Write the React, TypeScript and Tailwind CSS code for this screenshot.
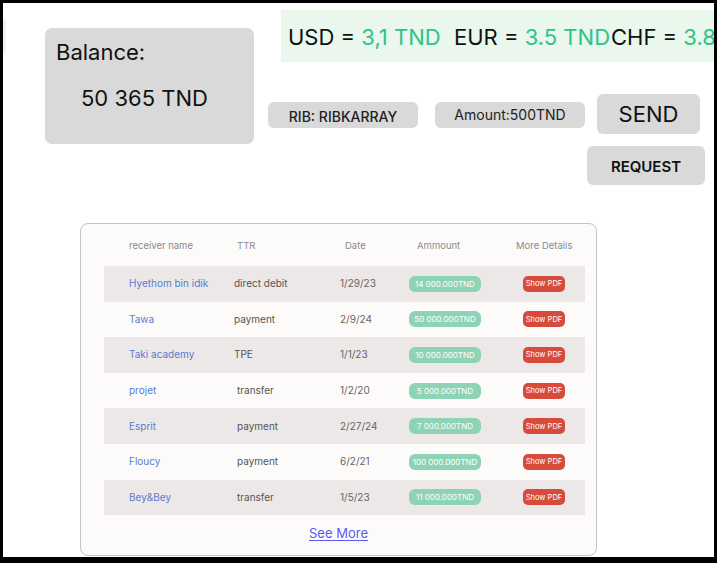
const rows = [
  { name: 'Hyethom bin idik', ttr: 'direct debit', date: '1/29/23', amount: '14 000.000TND', shift: false },
  { name: 'Tawa', ttr: 'payment', date: '2/9/24', amount: '50 000.000TND', shift: false },
  { name: 'Taki academy', ttr: 'TPE', date: '1/1/23', amount: '10 000.000TND', shift: false },
  { name: 'projet', ttr: 'transfer', date: '1/2/20', amount: '5 000.000TND', shift: true },
  { name: 'Esprit', ttr: 'payment', date: '2/27/24', amount: '7 000.000TND', shift: true },
  { name: 'Floucy', ttr: 'payment', date: '6/2/21', amount: '100 000.000TND', shift: true },
  { name: 'Bey&Bey', ttr: 'transfer', date: '1/5/23', amount: '11 000.000TND', shift: true },
];

const App = () => {
  return (
    <div className="bg-black pt-[3px] pl-[3px] pr-[3px] pb-[6px] font-['Inter',sans-serif]">
      <div className="bg-white h-[554px] overflow-hidden">
        {/* top area */}
        <div className="flex h-[182px]">
          <div className="w-[3px] h-[33px] mt-[17px] bg-[#f1f1f1] shrink-0" />
          <div className="ml-[39px] mt-[25px] w-[209px] h-[116px] shrink-0 rounded-[7px] bg-[#d9d9d9] text-[#111]">
            <p className="pl-[11px] pt-[10px] text-[22px] leading-[28px]">Balance:</p>
            <p className="pl-[36px] pt-[18px] text-[22px] leading-[28px]">50 365 TND</p>
          </div>
          <div className="ml-[14px] flex flex-col shrink-0">
            <div className="ml-[13px] mt-[7px] w-[440px] h-[52px] bg-[#e9f7ec] flex items-center pl-[7px] pt-[2px] text-[22px] whitespace-nowrap text-[#111]">
              <span className="w-[166px] shrink-0">
                USD = <span className="text-[#2cc489]">3,1 TND</span>
              </span>
              <span className="w-[157px] shrink-0">
                EUR = <span className="text-[#2cc489]">3.5 TND</span>
              </span>
              <span className="shrink-0">
                CHF = <span className="text-[#2cc489]">3.8</span>
              </span>
            </div>
            <div className="flex items-start mt-[32px]">
              <div className="mt-[8px] w-[150px] h-[26px] rounded-[6px] bg-[#d9d9d9] flex items-center justify-center text-[14px] font-medium text-[#222] pt-[2px]">
                RIB: RIBKARRAY
              </div>
              <div className="ml-[17px] mt-[8px] w-[150px] h-[26px] rounded-[6px] bg-[#d9d9d9] flex items-center justify-center text-[14px] text-[#222] pb-[1px]">
                Amount:500TND
              </div>
              <div className="ml-[2px] w-[118px] flex flex-col">
                <button className="ml-[10px] w-[103px] h-[40px] rounded-[6px] bg-[#d9d9d9] text-[22px] text-[#111]">
                  SEND
                </button>
                <button className="mt-[12px] w-[118px] h-[39px] rounded-[6px] bg-[#d9d9d9] text-[15px] font-semibold text-[#111] pt-[4px]">
                  REQUEST
                </button>
              </div>
            </div>
          </div>
        </div>

        {/* transactions table */}
        <div className="ml-[77px] mt-[38px] w-[517px] h-[333px] rounded-[8px] border border-[#c4c4c4] bg-[#fcfbfa] pl-[23px] pr-[11px]">
          <div className="flex items-center h-[42px] pl-[25px] pt-[2px] text-[9.5px] text-[#8a8a8a]">
            <span className="w-[108px]">receiver name</span>
            <span className="w-[108px]">TTR</span>
            <span className="w-[72px]">Date</span>
            <span className="w-[99px]">Ammount</span>
            <span>More Details</span>
          </div>
          {rows.map((r, i) => (
            <div
              key={r.name}
              className={`flex items-center h-[35.6px] pl-[25px] text-[10px] ${i % 2 === 0 ? 'bg-[#ebe8e7]' : ''}`}
            >
              <span className="w-[105px] text-[#5b7bd0]">{r.name}</span>
              <span className={`w-[106px] text-[#555] ${r.shift ? 'pl-[3px]' : ''}`}>{r.ttr}</span>
              <span className="w-[69px] text-[#666]">{r.date}</span>
              <span className="w-[114px]">
                <span className="flex items-center justify-center w-[72px] h-[16px] rounded-[6px] bg-[#8fd3b6] text-white text-[8px]">
                  {r.amount}
                </span>
              </span>
              <span className="flex items-center justify-center w-[42px] h-[16px] rounded-[5px] bg-[#d64b3b] text-white text-[7.5px]">
                Show PDF
              </span>
            </div>
          ))}
          <div className="flex justify-center pt-[9px] pr-[12px]">
            <a href="#" className="text-[13px] text-[#5a5af2] underline underline-offset-2">
              See More
            </a>
          </div>
        </div>
      </div>
    </div>
  );
};

export default App;
